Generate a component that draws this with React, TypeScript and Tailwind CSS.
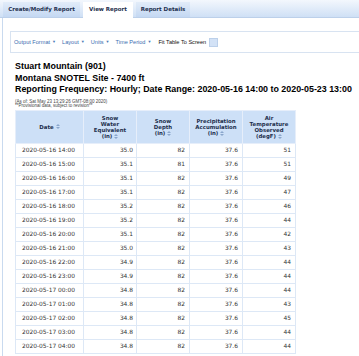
import React from "react";

const rows: [string, string, number, string, number][] = [
	["2020-05-16 14:00", "35.0", 82, "37.6", 51],
	["2020-05-16 15:00", "35.1", 81, "37.6", 51],
	["2020-05-16 16:00", "35.1", 82, "37.6", 49],
	["2020-05-16 17:00", "35.1", 82, "37.6", 47],
	["2020-05-16 18:00", "35.2", 82, "37.6", 46],
	["2020-05-16 19:00", "35.2", 82, "37.6", 44],
	["2020-05-16 20:00", "35.1", 82, "37.6", 42],
	["2020-05-16 21:00", "35.0", 82, "37.6", 43],
	["2020-05-16 22:00", "34.9", 82, "37.6", 44],
	["2020-05-16 23:00", "34.9", 82, "37.6", 44],
	["2020-05-17 00:00", "34.8", 82, "37.6", 44],
	["2020-05-17 01:00", "34.8", 82, "37.6", 43],
	["2020-05-17 02:00", "34.8", 82, "37.6", 45],
	["2020-05-17 03:00", "34.8", 82, "37.6", 44],
	["2020-05-17 04:00", "34.8", 82, "37.6", 44],
];

const headers = [
	["Date"],
	["Snow", "Water", "Equivalent", "(in)"],
	["Snow", "Depth", "(in)"],
	["Precipitation", "Accumulation", "(in)"],
	["Air", "Temperature", "Observed", "(degF)"],
];

function SortIcon() {
	return (
		<svg className="ml-[2px] inline-block align-[-0.5px]" width="4" height="5" viewBox="0 0 4 5">
			<path d="M2 0 L4 2 H0 Z M2 5 L0 3 H4 Z" fill="#8aa6cc" />
		</svg>
	);
}

function Caret() {
	return <span className="ml-[2px] text-[4px] text-[#4a78b5]">▼</span>;
}

const toolItems = ["Output Format", "Layout", "Units", "Time Period"];

export default function App() {
	return (
		<div className="h-[356px] w-[359px] overflow-hidden bg-white font-['Liberation_Sans',Arial,sans-serif]">
			{/* tab strip */}
			<div className="flex h-[18px] items-end gap-[3px] border-b border-[#bcd0ea] bg-gradient-to-b from-[#f3f7fd] to-[#cfe0f5] pl-[3px] font-['DejaVu_Sans',sans-serif] text-[5.5px] font-bold text-[#1d2f4d]">
				<div className="flex h-[15px] w-[77px] items-center justify-center bg-gradient-to-b from-[#e2ecf9] to-[#c4d8f2]">
					Create/Modify Report
				</div>
				<div className="-mb-px flex h-[16px] w-[50px] items-center justify-center bg-white pb-px">
					View Report
				</div>
				<div className="flex h-[15px] w-[54px] items-center justify-center bg-gradient-to-b from-[#e2ecf9] to-[#c4d8f2]">
					Report Details
				</div>
			</div>

			<div className="ml-[2px] h-full border-l border-[#c9daef] pt-[13px]">
				{/* toolbar */}
				<div className="ml-[7px] flex h-[22px] items-center border-y border-l border-[#d8e3f1] pl-[3px] text-[5.6px]">
					{toolItems.map((t) => (
						<span key={t} className="mr-[6px] flex items-center text-[#3b6db0]">
							{t}
							<Caret />
						</span>
					))}
					<span className="ml-[1px] text-[#111]">Fit Table To Screen</span>
					<span className="ml-[3px] h-[9px] w-[9px] border border-[#bcd0ea] bg-[#d3e2f6]" />
				</div>

				<div className="ml-[12px] mt-[8px] text-[8.9px] font-bold leading-[11.5px] text-black">
					<div>Stuart Mountain (901)</div>
					<div>Montana SNOTEL Site - 7400 ft</div>
					<div className="whitespace-nowrap">
						Reporting Frequency: Hourly; Date Range: 2020-05-16 14:00 to 2020-05-23 13:00
					</div>
				</div>

				<div className="ml-[12px] mt-[4px] text-[4.5px] leading-[4.8px] text-[#444]">
					<div>(As of: Sat May 23 13:29:26 GMT-08:00 2020)</div>
					<div>**Provisional data, subject to revision**</div>
				</div>

				<table className="ml-[12px] mt-[1px] table-fixed border-collapse font-['DejaVu_Sans',sans-serif]">
					<colgroup>
						<col className="w-[68px]" />
						<col className="w-[53px]" />
						<col className="w-[53px]" />
						<col className="w-[53px]" />
						<col className="w-[53px]" />
					</colgroup>
					<thead>
						<tr className="h-[33px] bg-[#cde0f7]">
							{headers.map((h, i) => (
								<th
									key={i}
									className="border border-[#e6eefa] px-0 text-center align-middle text-[5.4px] font-bold leading-[6.3px] text-[#1d2f4d]"
								>
									{h.map((line, j) => (
										<div key={j}>
											{line}
											{j === h.length - 1 && <SortIcon />}
										</div>
									))}
								</th>
							))}
						</tr>
					</thead>
					<tbody className="text-[5.9px] text-[#333]">
						{rows.map((r) => (
							<tr key={r[0]} className="h-[14px]">
								<td className="border border-[#dde8f6] pl-[6px] text-left">{r[0]}</td>
								<td className="border border-[#dde8f6] pr-[3px] text-right">{r[1]}</td>
								<td className="border border-[#dde8f6] pr-[4px] text-right">{r[2]}</td>
								<td className="border border-[#dde8f6] pr-[4px] text-right">{r[3]}</td>
								<td className="border border-[#dde8f6] pr-[4px] text-right">{r[4]}</td>
							</tr>
						))}
					</tbody>
				</table>
			</div>
		</div>
	);
}
